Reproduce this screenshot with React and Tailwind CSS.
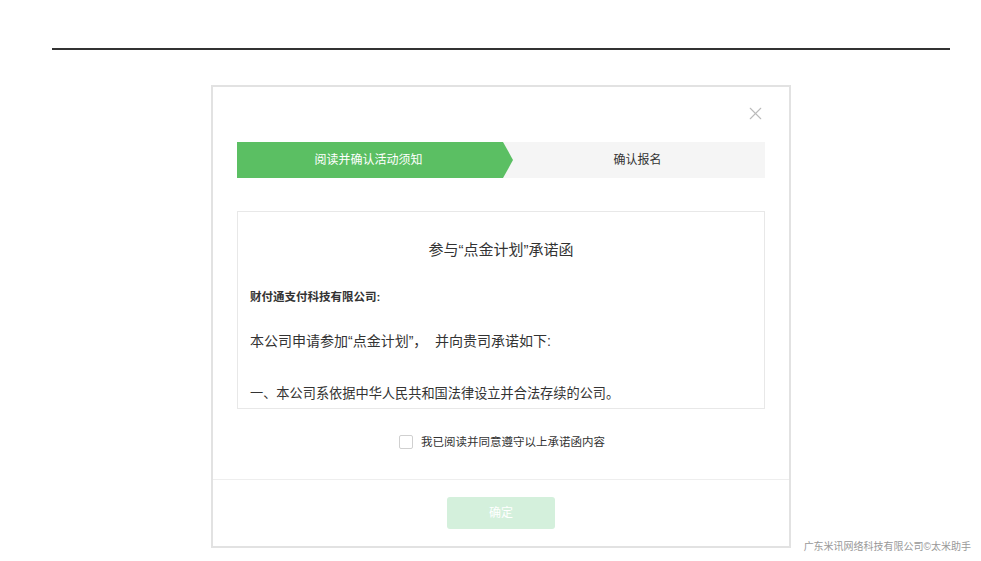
import { X } from "lucide-react";

const FONT = {
  fontFamily: '"Liberation Sans", "Noto Sans CJK SC", sans-serif',
};

function Steps() {
  return (
    <div className="flex h-9 text-xs">
      <div className="relative flex w-[266px] items-center justify-center pr-[3px] bg-[#5bbf63] text-white">
        阅读并确认活动须知
        <svg
          className="absolute left-full top-0 z-10"
          width="10"
          height="36"
          viewBox="0 0 10 36"
        >
          <polygon points="0,0 0,36 0,36 10,18" fill="#5bbf63" />
        </svg>
      </div>
      <div className="flex flex-1 items-center justify-center bg-[#f5f5f5] pl-[7px] text-[#333]">
        确认报名
      </div>
    </div>
  );
}

export default function App() {
  return (
    <div className="relative h-[561px] w-full overflow-hidden bg-white" style={FONT}>
      {/* top rule */}
      <div className="ml-[52px] mr-[31px] mt-[48px] h-[2px] bg-[#333]" />

      {/* dialog */}
      <div className="ml-[211px] mt-[35px] flex h-[463px] w-[580px] flex-col border-2 border-[#e2e2e2] bg-white">
        <div className="flex justify-end pr-[23px] pt-[16px]">
          <X size={21} strokeWidth={1.3} className="text-[#bbb]" />
        </div>

        <div className="px-[24px] pt-[18px]">
          <Steps />

          <div className="mt-[33px] h-[198px] overflow-hidden border border-[#e8e8e8] px-[12px] text-[#333]">
            <div className="mt-[27px] text-center text-[15px] leading-[22px]">
              参与“点金计划”承诺函
            </div>
            <div className="mt-[27px] text-[11.5px] font-bold leading-[18px]">
              财付通支付科技有限公司:
            </div>
            <div className="mt-[24px] text-sm leading-[22px]">
              本公司申请参加“点金计划”，&nbsp;&nbsp;并向贵司承诺如下:
            </div>
            <div className="mt-[31px] text-[13.2px] leading-[22px]">
              一、本公司系依据中华人民共和国法律设立并合法存续的公司。
            </div>
          </div>

          <div className="mt-[26px] flex items-center justify-center gap-[8px] pl-[2px]">
            <span className="h-[14px] w-[14px] rounded-[2px] border border-[#d0d0d0] bg-white" />
            <span className="text-[11.5px] leading-[14px] text-[#333]">
              我已阅读并同意遵守以上承诺函内容
            </span>
          </div>
        </div>

        <div className="mt-[30px] border-t border-[#eee]" />

        <div className="flex justify-center pt-[17px]">
          <button className="h-8 w-[108px] rounded-[3px] bg-[#d4f0dc] text-xs text-white">
            确定
          </button>
        </div>
      </div>

      {/* watermark */}
      <div className="absolute bottom-[7px] right-[10px] text-[10px] text-[#999]">
        广东米讯网络科技有限公司©太米助手
      </div>
    </div>
  );
}
